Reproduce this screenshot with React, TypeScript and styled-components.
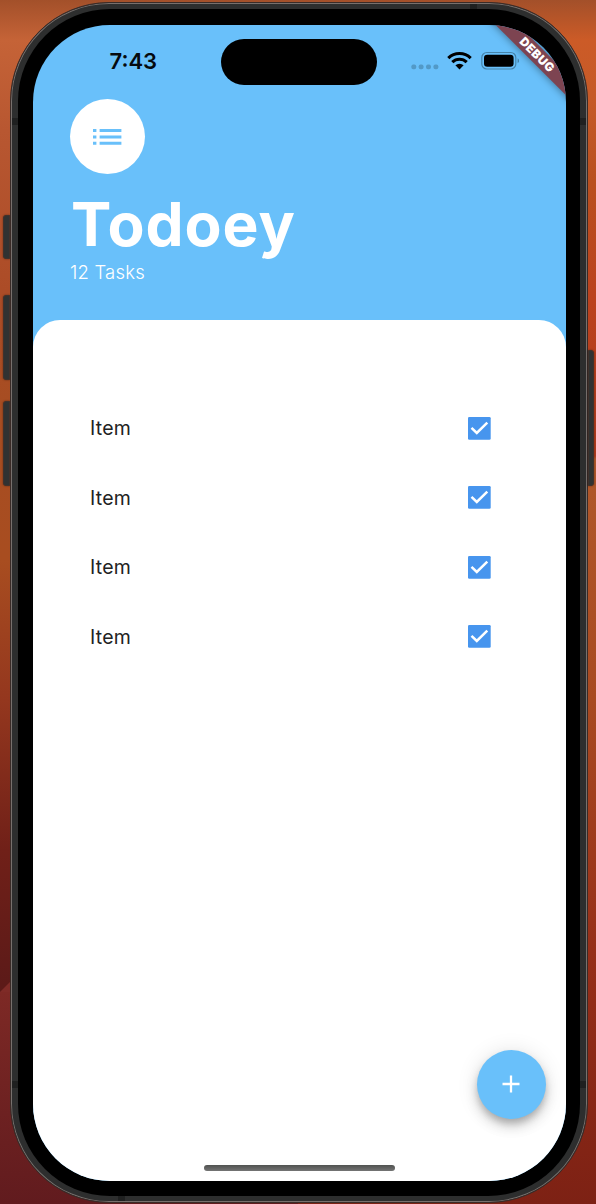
import React from "react";
import styled, { createGlobalStyle } from "styled-components";

const sky = "#69c0fa";

const GlobalStyle = createGlobalStyle`
  * { box-sizing: border-box; }
  body { margin: 0; font-family: Inter, "Liberation Sans", sans-serif; }
`;

const Desktop = styled.div`
  display: grid;
  grid-template-columns: 10px 578px 8px;
  width: 596px;
  height: 1204px;
  padding: 2px 0 1px;
  overflow: hidden;
  background:
    linear-gradient(135deg, transparent 49%, #7f2b27 51%) 0 982px / 10px 10px no-repeat,
    linear-gradient(to bottom, #7d2925, #611b1e) 0 992px / 150px 212px no-repeat,
    linear-gradient(to bottom, #a3502a 0, #cc5b27 40px, #c55a28 100px, #b9501f 180px, #bb421e 300px, #ae3b1c 456px, #b0582a 459px, #a84a21 700px, #962f19 950px, #7d2114 1204px) 298px 0 / 298px 1204px no-repeat,
    linear-gradient(to bottom, #a3502a 0, #c56337 40px, #b85731 130px, #ac4c27 290px, #a74d22 400px, #a84d20 560px, #94371e 700px, #702018 850px, #5c1a18 985px, #611b1e 1204px);
`;

const Rail = styled.div<{ $side: "left" | "right" }>`
  display: flex;
  flex-direction: column;
  padding: ${(p) => (p.$side === "left" ? "213px 0 0 3px" : "348px 2px 0 0")};
`;

const SideButton = styled.div<{ $height: number; $gap?: number; $side: "left" | "right" }>`
  height: ${(p) => p.$height}px;
  margin-bottom: ${(p) => p.$gap ?? 0}px;
  border: 1px solid #40322c;
  border-radius: ${(p) => (p.$side === "left" ? "3px 0 0 3px" : "0 3px 3px 0")};
  background: #303232;
  box-shadow: 0 0 2px #0007;
`;

const band = "linear-gradient(#1f2020, #1f2020)";

const Frame = styled.div`
  height: 1201px;
  padding: 6px 7px 6px 7px;
  border: 1px solid #3a2b27;
  border-radius: 99px;
  background:
    ${band} 459px 1px / 7px 7px no-repeat,
    ${band} 107px 1191px / 7px 7px no-repeat,
    ${band} 0 115px / 100% 7px no-repeat,
    ${band} 0 1078px / 100% 7px no-repeat,
    #2d2e2e;
  box-shadow: inset 0 0 0 1px #77706d;
`;

const Bezel = styled.div`
  height: 100%;
  padding: 16px 14px 14px 15px;
  border-radius: 92px;
  background: #000;
`;

const Screen = styled.main`
  position: relative;
  width: 533px;
  height: 1156px;
  display: flex;
  flex-direction: column;
  overflow: hidden;
  border-radius: 77px;
  background: ${sky};
`;

const StatusBar = styled.div`
  display: flex;
  justify-content: space-between;
  height: 74px;
  padding: 0 47px 0 76.5px;
`;

const Clock = styled.time`
  padding-top: 22px;
  font-size: 22px;
  line-height: 28px;
  font-weight: 600;
  color: #050a0e;
`;

const Island = styled.div`
  width: 156px;
  height: 46px;
  margin: 14px 0 0 32px;
  border-radius: 23px;
  background: #000;
`;

const StatusIcons = styled.svg`
  margin-top: 20px;
`;

const Header = styled.header`
  height: 221px;
  padding-left: 37px;
  color: #fff;
`;

const Avatar = styled.div`
  display: flex;
  align-items: center;
  justify-content: center;
  width: 75px;
  height: 75px;
  border-radius: 50%;
  background: #fff;
`;

const Title = styled.h1`
  margin: 12px 0 0 1px;
  font-size: 60.5px;
  line-height: 76px;
  font-weight: 700;
  letter-spacing: 0.9px;
`;

const Count = styled.p`
  margin: 0;
  font-size: 18.5px;
  line-height: 20px;
  font-weight: 300;
  letter-spacing: 0.2px;
`;

const Sheet = styled.section`
  flex: 1;
  padding: 73.5px 75px 0 57px;
  border-radius: 27px 27px 0 0;
  background: #fff;
`;

const Task = styled.div`
  display: flex;
  align-items: center;
  justify-content: space-between;
  height: 69.5px;
  font-size: 19.5px;
  letter-spacing: 0.25px;
  color: #222;
`;

const Check = styled.svg`
  display: block;
  width: 23px;
  height: 23px;
`;

const AddButton = styled.button`
  position: absolute;
  right: 20px;
  bottom: 62px;
  display: flex;
  align-items: center;
  justify-content: center;
  width: 69.5px;
  height: 69.5px;
  padding: 0;
  border: 0;
  border-radius: 50%;
  background: ${sky};
  box-shadow: 0 5px 7px -1px #0003, 0 8px 13px #00000024, 0 1px 22px #0000001c;
`;

const HomeBar = styled.div`
  position: absolute;
  left: 171px;
  bottom: 10px;
  width: 191px;
  height: 6px;
  border-radius: 3px;
  background: linear-gradient(#505250, #747474);
`;

const Ribbon = styled.div`
  position: absolute;
  top: 21.5px;
  right: -50.5px;
  width: 160px;
  height: 16px;
  transform: rotate(45deg);
  background: #7d4451;
  box-shadow: 0 0 8px #0007;
  color: #fff;
  text-align: center;
  font-size: 12px;
  line-height: 16px;
  font-weight: 900;
  letter-spacing: 0.4px;
`;

const tasks = ["Item", "Item", "Item", "Item"];

export default function App() {
  return (
    <>
      <GlobalStyle />
      <Desktop>
        <Rail $side="left">
          <SideButton $side="left" $height={44} $gap={36} />
          <SideButton $side="left" $height={85} $gap={21} />
          <SideButton $side="left" $height={85} />
        </Rail>
        <Frame>
          <Bezel>
            <Screen>
              <StatusBar>
                <Clock>7:43</Clock>
                <Island />
                <StatusIcons width="110" height="30" viewBox="0 0 110 30">
                  <g fill="#5299c7">
                    <rect x="2.4" y="19.5" width="4.8" height="4.8" rx="1.8" />
                    <rect x="9.7" y="19.5" width="4.8" height="4.8" rx="1.8" />
                    <rect x="17.1" y="19.5" width="4.8" height="4.8" rx="1.8" />
                    <rect x="24.5" y="19.5" width="4.8" height="4.8" rx="1.8" />
                  </g>
                  <g fill="none" stroke="#000" strokeWidth="3.1">
                    <path d="M39.3 13.1a16 16 0 0 1 22.4 0" />
                    <path d="M43.3 17.2a10.3 10.3 0 0 1 14.4 0" />
                  </g>
                  <path d="M46.4 20.3a6 6 0 0 1 8.2 0L50.5 24.4z" />
                  <rect x="72.8" y="7.5" width="34" height="16.5" rx="5" fill="none" stroke="#4684aa" strokeWidth="1.2" />
                  <rect x="75" y="9.8" width="29.6" height="12" rx="3.3" />
                  <path d="M108.6 13.2c2 .8 2 4.3 0 5.1z" fill="#4684aa" />
                </StatusIcons>
              </StatusBar>
              <Header>
                <Avatar>
                  <svg width="29" height="16" viewBox="0 0 29 16" fill={sky}>
                    <path d="M0 0h3.4v3H0zM6.6 0H28.4v3H6.6zM0 6.4h3.4v3H0zM6.6 6.4H28.4v3H6.6zM0 12.7h3.4v3H0zM6.6 12.7H28.4v3H6.6z" />
                  </svg>
                </Avatar>
                <Title>Todoey</Title>
                <Count>12 Tasks</Count>
              </Header>
              <Sheet>
                {tasks.map((task, i) => (
                  <Task key={i}>
                    {task}
                    <Check viewBox="0 0 23 23">
                      <rect width="22.7" height="22.7" rx="1.3" fill="#4795ee" />
                      <path d="M3.5 10.8l5.3 5.2L19.3 5.7" fill="none" stroke="#fff" strokeWidth="2.5" />
                    </Check>
                  </Task>
                ))}
              </Sheet>
              <AddButton aria-label="Add task">
                <svg width="18" height="18" viewBox="0 0 18 18">
                  <path d="M0.5 9h17M9 .5v17" stroke="#fff" strokeWidth="2.3" />
                </svg>
              </AddButton>
              <HomeBar />
              <Ribbon>DEBUG</Ribbon>
            </Screen>
          </Bezel>
        </Frame>
        <Rail $side="right">
          <SideButton $side="right" $height={136} />
        </Rail>
      </Desktop>
    </>
  );
}
